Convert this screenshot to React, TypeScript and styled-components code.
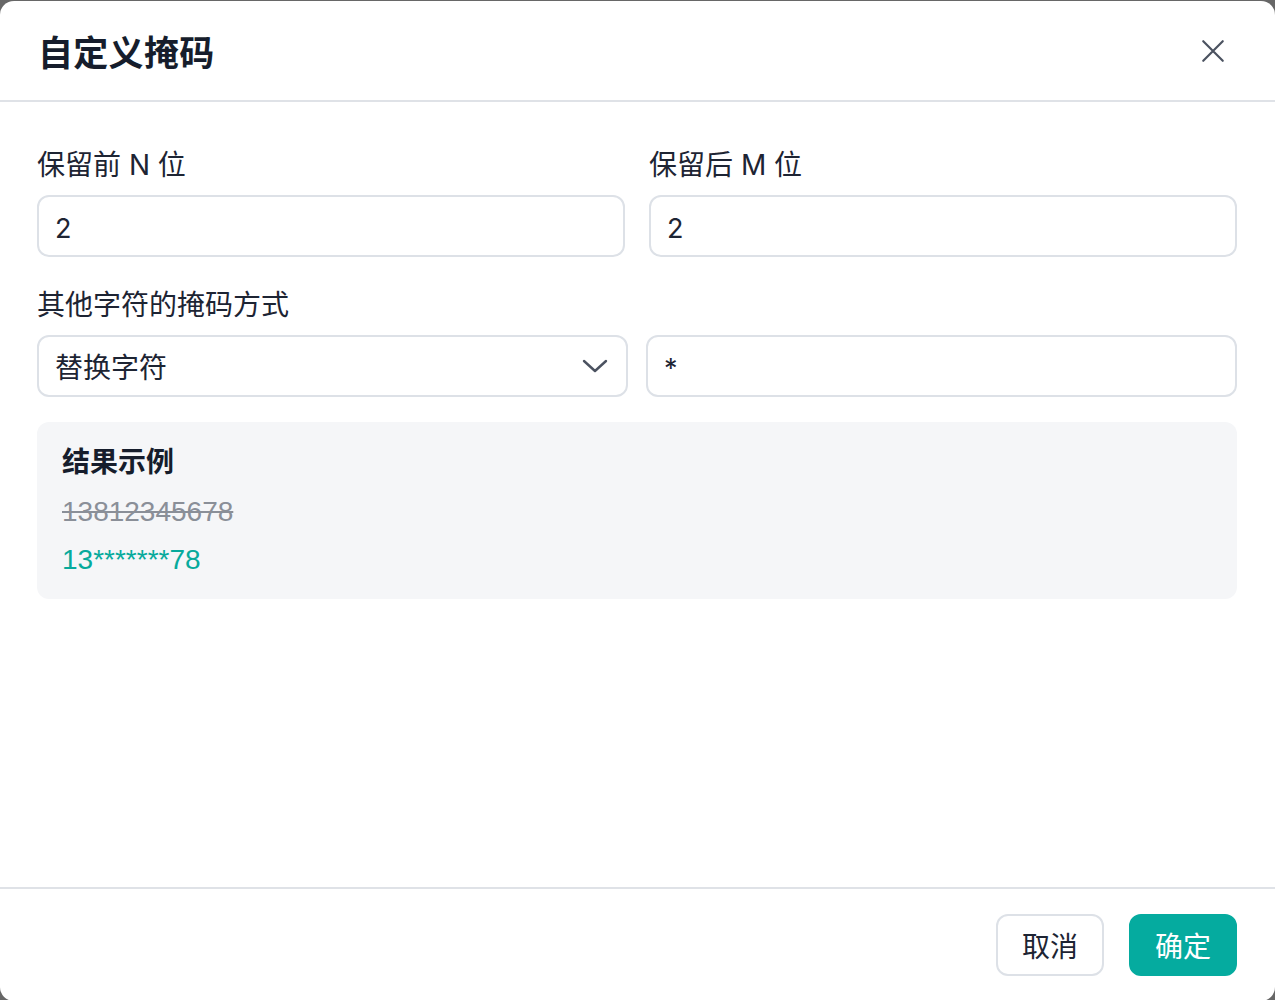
import React from "react";
import styled, { createGlobalStyle } from "styled-components";

const Global = createGlobalStyle`
  html, body { margin: 0; padding: 0; }
  body {
    background: #676767;
    overflow: hidden;
    font-family: Inter, "Noto Sans CJK SC", sans-serif;
  }
`;

const Backdrop = styled.div`
  width: 1275px;
  height: 1000px;
  padding-top: 1px;
  box-sizing: border-box;
`;

const Modal = styled.div`
  width: 1275px;
  height: 1000px;
  background: #ffffff;
  border-radius: 14px;
  display: flex;
  flex-direction: column;
  overflow: hidden;
`;

const Header = styled.div`
  height: 99px;
  flex: none;
  display: flex;
  align-items: center;
  justify-content: space-between;
  padding: 0 38px;
  border-bottom: 2px solid #dfe2e7;
`;

const Title = styled.h2`
  margin: 0;
  font-family: "Noto Sans CJK SC", sans-serif;
  font-size: 35px;
  font-weight: 700;
  color: #161d2c;
  line-height: 40px;
  letter-spacing: 0.3px;
`;

const CloseButton = styled.button`
  width: 48px;
  height: 48px;
  border: none;
  background: transparent;
  padding: 0;
  display: flex;
  align-items: center;
  justify-content: center;
  color: #4b5260;
  cursor: pointer;
`;

const Body = styled.div`
  flex: 1;
  padding: 43px 38px 0 37px;
  display: flex;
  flex-direction: column;
`;

const Row = styled.div<{ $gap: number }>`
  display: grid;
  grid-template-columns: 1fr 1fr;
  column-gap: ${(p) => p.$gap}px;
`;

const Field = styled.div`
  display: flex;
  flex-direction: column;
`;

const Label = styled.label<{ $top?: number }>`
  font-family: Inter, "Noto Sans CJK SC", sans-serif;
  font-size: 28px;
  line-height: 40px;
  color: #1d2433;
  margin-top: ${(p) => p.$top ?? 0}px;
  margin-bottom: 10px;
  display: block;
`;

const TextInput = styled.input`
  box-sizing: border-box;
  width: 100%;
  height: 62px;
  border: 2px solid #dde1e7;
  border-radius: 12px;
  padding: 4px 16px 0;
  font-family: Inter, "Noto Sans CJK SC", sans-serif;
  font-size: 27px;
  color: #1d2433;
  background: #fff;
  outline: none;
`;

const SelectBox = styled.div`
  box-sizing: border-box;
  height: 62px;
  border: 2px solid #dde1e7;
  border-radius: 12px;
  padding: 0 18px 0 16px;
  display: flex;
  align-items: center;
  justify-content: space-between;
  font-family: "Noto Sans CJK SC", sans-serif;
  font-size: 28px;
  color: #1d2433;
  background: #fff;
`;

const ResultCard = styled.div`
  margin-top: 25px;
  background: #f5f6f8;
  border-radius: 12px;
  padding: 18px 25px 21px;
  display: flex;
  flex-direction: column;
`;

const ResultTitle = styled.div`
  font-family: "Noto Sans CJK SC", sans-serif;
  font-size: 28px;
  font-weight: 700;
  line-height: 40px;
  color: #161d2c;
`;

const Original = styled.div`
  margin-top: 14px;
  font-family: "Liberation Sans", Arial, sans-serif;
  font-size: 28px;
  line-height: 36px;
  color: #8a8f98;
  text-decoration: line-through;
`;

const Masked = styled.div`
  margin-top: 12px;
  font-family: "Liberation Sans", Arial, sans-serif;
  font-size: 28px;
  line-height: 36px;
  color: #07aa9c;
`;

const Footer = styled.div`
  flex: none;
  border-top: 2px solid #dfe2e7;
  padding: 25px 38px 25px;
  display: flex;
  justify-content: flex-end;
  gap: 25px;
`;

const Button = styled.button<{ $primary?: boolean }>`
  box-sizing: border-box;
  height: 62px;
  min-width: ${(p) => (p.$primary ? 108 : 106)}px;
  padding: 0 24px;
  border-radius: 12px;
  font-family: "Noto Sans CJK SC", sans-serif;
  font-size: 28px;
  cursor: pointer;
  border: 2px solid ${(p) => (p.$primary ? "#05ab9f" : "#dde1e7")};
  background: ${(p) => (p.$primary ? "#05ab9f" : "#ffffff")};
  color: ${(p) => (p.$primary ? "#ffffff" : "#1d2433")};
`;

export default function App() {
  return (
    <>
      <Global />
      <Backdrop>
        <Modal>
          <Header>
            <Title>自定义掩码</Title>
            <CloseButton aria-label="关闭">
              <svg width="26" height="26" viewBox="0 0 24 24" fill="none" stroke="currentColor" strokeWidth="2" strokeLinecap="round">
                <path d="M3 3 L21 21 M21 3 L3 21" />
              </svg>
            </CloseButton>
          </Header>
          <Body>
            <Row $gap={24}>
              <Field>
                <Label>保留前 N 位</Label>
                <TextInput defaultValue="2" />
              </Field>
              <Field>
                <Label>保留后 M 位</Label>
                <TextInput defaultValue="2" />
              </Field>
            </Row>
            <Label $top={28}>其他字符的掩码方式</Label>
            <Row $gap={18}>
              <SelectBox>
                <span>替换字符</span>
                <svg width="26" height="16" viewBox="0 0 26 16" fill="none" stroke="#4b5260" strokeWidth="2.4" strokeLinecap="round" strokeLinejoin="round">
                  <path d="M2 3 L13 13 L24 3" />
                </svg>
              </SelectBox>
              <TextInput defaultValue="*" />
            </Row>
            <ResultCard>
              <ResultTitle>结果示例</ResultTitle>
              <Original>13812345678</Original>
              <Masked>13*******78</Masked>
            </ResultCard>
          </Body>
          <Footer>
            <Button>取消</Button>
            <Button $primary>确定</Button>
          </Footer>
        </Modal>
      </Backdrop>
    </>
  );
}
